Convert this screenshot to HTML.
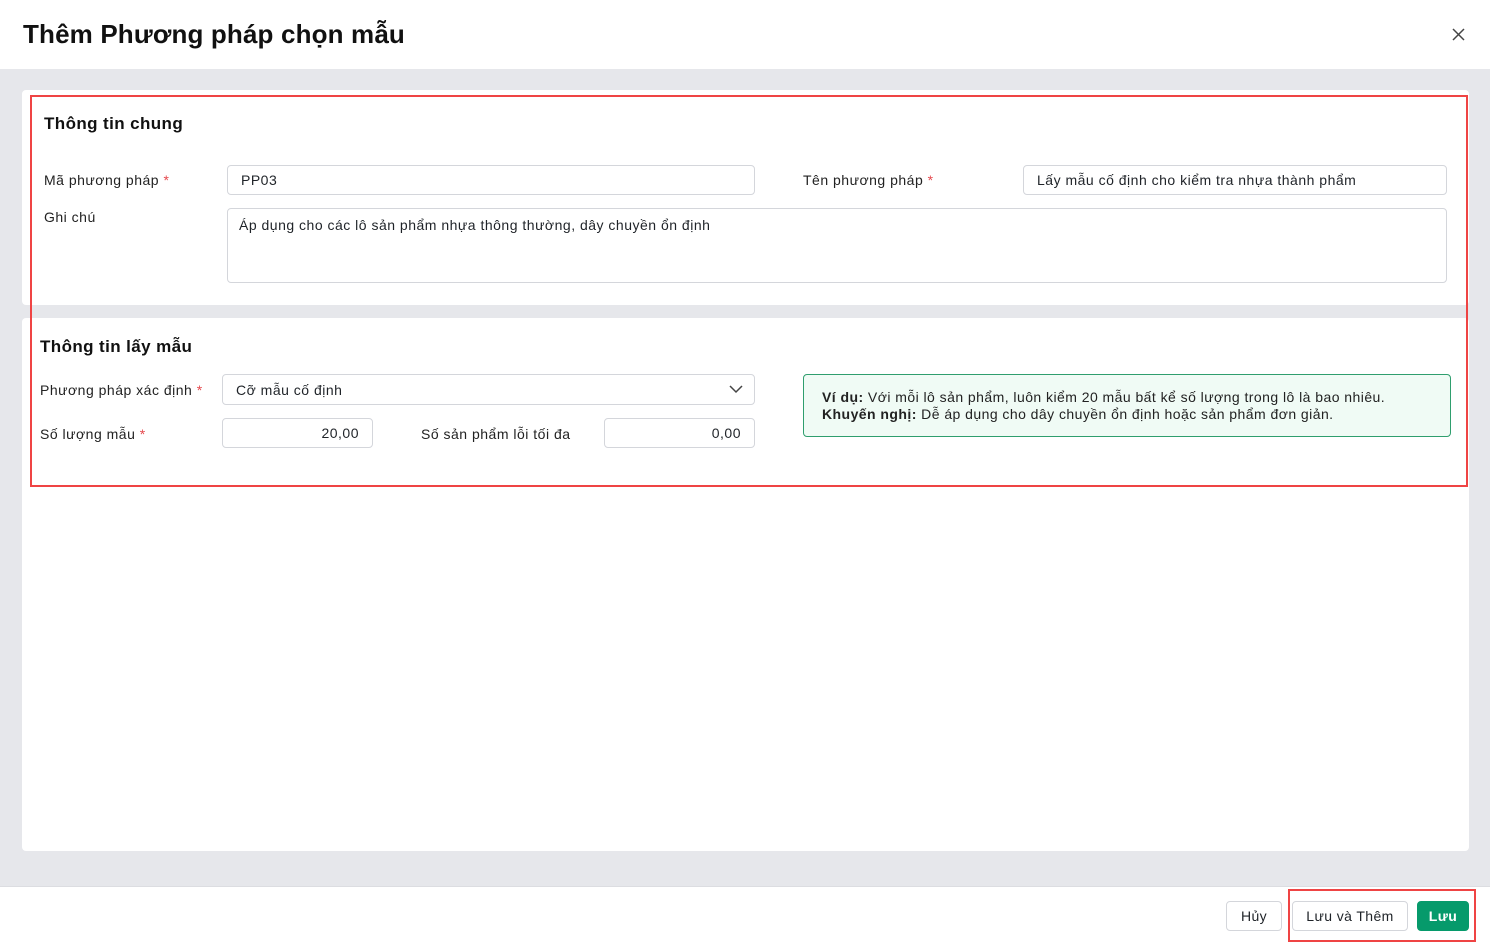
<!DOCTYPE html><html><head><meta charset="utf-8"><style>
*{box-sizing:border-box;margin:0;padding:0}
body{width:1490px;height:942px;position:relative;background:#fff;font-family:"Liberation Sans",sans-serif;color:#1f2328;overflow:hidden}
.a{position:absolute}
.in{position:absolute;border:1px solid #d4d6db;border-radius:4px;background:#fff;font-size:14px;padding:0 13px;display:flex;align-items:center;letter-spacing:0.5px}
.l{position:absolute;font-size:14px;color:#222;letter-spacing:0.5px}
.r{color:#e5484d}
.btn{position:absolute;height:30px;border:1px solid #d4d6db;border-radius:4px;font-size:14px;display:flex;align-items:center;justify-content:center;background:#fff;letter-spacing:0.4px}
</style></head><body>
<div class="a" style="left:23px;top:19px;font-size:26px;font-weight:bold;color:#111;letter-spacing:0.15px">Thêm Phương pháp chọn mẫu</div>
<svg class="a" style="left:1452px;top:28px" width="13" height="13" viewBox="0 0 13 13"><path d="M1 1L12 12M12 1L1 12" stroke="#444" stroke-width="1.5"/></svg>
<div class="a" style="left:0;top:69px;width:1490px;height:818px;background:#e6e7eb"></div>
<div class="a" style="left:22px;top:90px;width:1447px;height:215px;background:#fff;border-radius:4px"></div>
<div class="a" style="left:22px;top:318px;width:1447px;height:533px;background:#fff;border-radius:4px"></div>
<div class="a" style="left:44px;top:114px;font-size:17px;font-weight:bold;color:#111;letter-spacing:0.4px">Thông tin chung</div>
<div class="l" style="left:44px;top:172px">Mã phương pháp <span class="r">*</span></div>
<div class="in" style="left:227px;top:165px;width:528px;height:30px">PP03</div>
<div class="l" style="left:803px;top:172px">Tên phương pháp <span class="r">*</span></div>
<div class="in" style="left:1023px;top:165px;width:424px;height:30px">Lấy mẫu cố định cho kiểm tra nhựa thành phẩm</div>
<div class="l" style="left:44px;top:209px">Ghi chú</div>
<div class="in" style="left:227px;top:208px;width:1220px;height:75px;align-items:flex-start;padding:8px 11px">Áp dụng cho các lô sản phẩm nhựa thông thường, dây chuyền ổn định</div>
<div class="a" style="left:40px;top:337px;font-size:17px;font-weight:bold;color:#111;letter-spacing:0.4px">Thông tin lấy mẫu</div>
<div class="l" style="left:40px;top:382px">Phương pháp xác định <span class="r">*</span></div>
<div class="in" style="left:222px;top:374px;width:533px;height:31px">Cỡ mẫu cố định</div>
<svg class="a" style="left:729px;top:385px" width="14" height="9" viewBox="0 0 14 9"><path d="M1 1L7 7L13 1" stroke="#444" stroke-width="1.5" fill="none"/></svg>
<div class="l" style="left:40px;top:426px">Số lượng mẫu <span class="r">*</span></div>
<div class="in" style="left:222px;top:418px;width:151px;height:30px;justify-content:flex-end">20,00</div>
<div class="l" style="left:421px;top:426px">Số sản phẩm lỗi tối đa</div>
<div class="in" style="left:604px;top:418px;width:151px;height:30px;justify-content:flex-end">0,00</div>
<div class="a" style="left:803px;top:374px;width:648px;height:63px;border:1px solid #2f9e6e;border-radius:4px;background:#f0fbf5;padding:14px 18px;font-size:14px;line-height:17px;color:#222;letter-spacing:0.45px"><b>Ví dụ:</b> Với mỗi lô sản phẩm, luôn kiểm 20 mẫu bất kể số lượng trong lô là bao nhiêu.<br><b>Khuyến nghị:</b> Dễ áp dụng cho dây chuyền ổn định hoặc sản phẩm đơn giản.</div>
<div class="a" style="left:30px;top:95px;width:1438px;height:392px;border:2px solid #ef4444"></div>
<div class="a" style="left:0;top:886px;width:1490px;height:1px;background:#dcdde1"></div>
<div class="btn" style="left:1226px;top:901px;width:56px">Hủy</div>
<div class="btn" style="left:1292px;top:901px;width:116px">Lưu và Thêm</div>
<div class="btn" style="left:1417px;top:901px;width:52px;background:#069a6b;border-color:#069a6b;color:#fff;font-weight:bold">Lưu</div>
<div class="a" style="left:1288px;top:889px;width:188px;height:53px;border:2px solid #ef4444"></div>
</body></html>
